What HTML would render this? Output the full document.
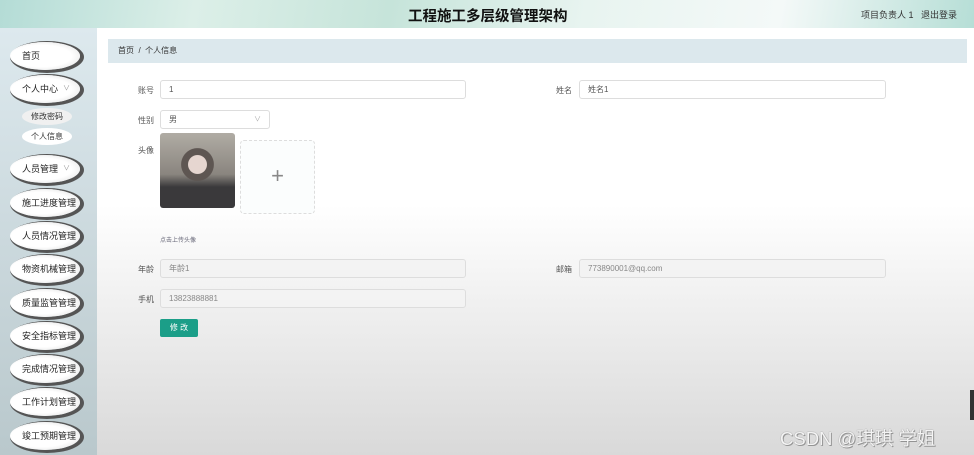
<!DOCTYPE html><html><head><meta charset="utf-8"><style>
*{margin:0;padding:0;box-sizing:border-box}
body{width:974px;height:455px;overflow:hidden;position:relative;font-family:"Liberation Sans","Noto Sans CJK SC",sans-serif;background:linear-gradient(#fff 0%,#fff 45%,#d9d9d9 100%)}
.hdr{position:absolute;left:0;top:0;width:974px;height:28px;background:linear-gradient(100deg,#b4dcd6 0%,#dcefe8 20%,#c6e4da 40%,#e8f4f0 60%,#f4f9f8 80%,#b6ded6 100%)}
.title{position:absolute;left:408px;top:5px;font-size:14.5px;font-weight:bold;color:#111}
.hr{position:absolute;top:8px;font-size:9px;color:#333}
.side{position:absolute;left:0;top:28px;width:97px;height:427px;background:linear-gradient(#dde9ee,#b9c8cc)}
.el{position:absolute;left:10px;width:70px;height:28px;border-radius:50%;background:radial-gradient(ellipse at 45% 50%,#fff 55%,#eee 75%);box-shadow:2px 1px 0 2px #555;font-size:9px;color:#222;line-height:28px;padding-left:12px}
.sub{position:absolute;left:22px;width:50px;height:17px;border-radius:50%;background:#f0f0f0;font-size:8px;color:#333;text-align:center;line-height:17px}
.bc{position:absolute;left:108px;top:39px;width:859px;height:24px;background:#dce8ed;font-size:8px;color:#333;line-height:24px;padding-left:10px}
.lb{position:absolute;font-size:8px;color:#555;text-align:right;width:40px}
.in{position:absolute;height:19px;border:1px solid #ddd;border-radius:3px;background:#fff;font-size:8px;color:#555;line-height:17px;padding-left:8px}
.dis{background:#f3f3f3;color:#888}
</style></head><body>
<div class="hdr"></div>
<div class="title">工程施工多层级管理架构</div>
<div class="hr" style="left:861px">项目负责人 1</div>
<div class="hr" style="left:921px">退出登录</div>
<div class="side"></div>
<div class="el" style="top:42px">首页</div>
<div class="el" style="top:75px">个人中心 <span style="position:absolute;right:10px;font-size:7px;color:#999">∨</span></div>
<div class="sub" style="top:108px">修改密码</div>
<div class="sub" style="top:128px;background:#fff">个人信息</div>
<div class="el" style="top:155px">人员管理 <span style="position:absolute;right:10px;font-size:7px;color:#999">∨</span></div>
<div class="el" style="top:189px">施工进度管理</div>
<div class="el" style="top:222px">人员情况管理</div>
<div class="el" style="top:255px">物资机械管理</div>
<div class="el" style="top:289px">质量监管管理</div>
<div class="el" style="top:322px">安全指标管理</div>
<div class="el" style="top:355px">完成情况管理</div>
<div class="el" style="top:388px">工作计划管理</div>
<div class="el" style="top:422px">竣工预期管理</div>
<div class="bc">首页 &nbsp;/&nbsp; 个人信息</div>
<div class="lb" style="left:114px;top:85px">账号</div>
<div class="in" style="left:160px;top:80px;width:306px">1</div>
<div class="lb" style="left:532px;top:85px">姓名</div>
<div class="in" style="left:579px;top:80px;width:307px">姓名1</div>
<div class="lb" style="left:114px;top:115px">性别</div>
<div class="in" style="left:160px;top:110px;width:110px">男<span style="position:absolute;right:8px;color:#aaa;font-size:7px">∨</span></div>
<div class="lb" style="left:114px;top:145px">头像</div>
<div style="position:absolute;left:160px;top:133px;width:75px;height:75px;border-radius:3px;background:radial-gradient(circle at 50% 42%,#e6d6d0 0 16%,#5e5652 17% 28%,transparent 29%),linear-gradient(#b0aca4,#8a857f 55%,#3a393b 72%)"></div>
<div style="position:absolute;left:240px;top:140px;width:75px;height:74px;border:1px dashed #ddd;border-radius:4px;background:#fbfdfd;font-size:22px;color:#888;text-align:center;line-height:70px;font-weight:200">+</div>
<div style="position:absolute;left:160px;top:235px;font-size:6px;color:#667">点击上传头像</div>
<div class="lb" style="left:114px;top:264px">年龄</div>
<div class="in dis" style="left:160px;top:259px;width:306px">年龄1</div>
<div class="lb" style="left:532px;top:264px">邮箱</div>
<div class="in dis" style="left:579px;top:259px;width:307px">773890001@qq.com</div>
<div class="lb" style="left:114px;top:294px">手机</div>
<div class="in dis" style="left:160px;top:289px;width:306px">13823888881</div>
<div style="position:absolute;left:160px;top:319px;width:38px;height:18px;background:#1b9e88;border-radius:2px;color:#fff;font-size:8px;text-align:center;line-height:18px">修 改</div>
<div style="position:absolute;left:970px;top:390px;width:4px;height:30px;background:#333"></div>
<div style="position:absolute;left:780px;top:425px;font-size:18.5px;color:#f4f4f4;text-shadow:0 0 1px #777,1px 1px 0 #999">CSDN @琪琪 学姐</div>
</body></html>
